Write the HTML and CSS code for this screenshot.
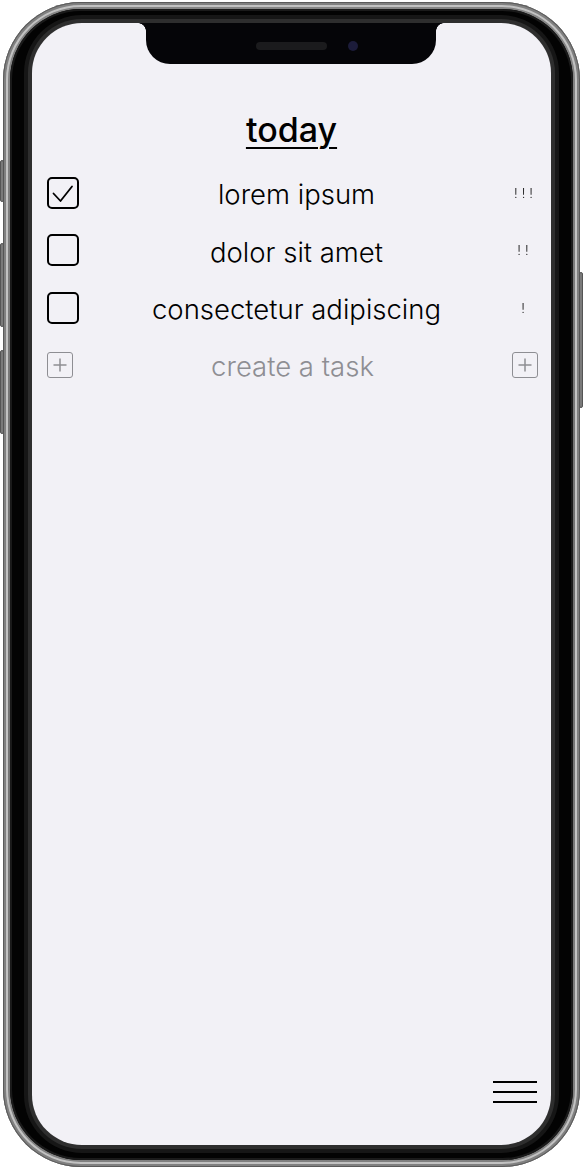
FILE: index.html
```html
<!DOCTYPE html>
<html lang="en">
<head>
<meta charset="utf-8">
<title>today</title>
<link rel="stylesheet" href="styles.css">
</head>
<body>
<div class="phone">
  <span class="btn btn-mute"></span>
  <span class="btn btn-vol-up"></span>
  <span class="btn btn-vol-down"></span>
  <span class="btn btn-power"></span>
  <div class="bezel">
    <div class="screen">
      <div class="notch">
        <span class="speaker"></span>
        <span class="camera"></span>
      </div>
      <h1 class="title">today</h1>
      <ul class="tasks">
        <li class="task">
          <span class="check checked">
            <svg viewBox="0 0 32 32" width="32" height="32"><polyline points="6.5,16.5 13.5,24 25,9.5" fill="none" stroke="#000" stroke-width="1.8" stroke-linecap="round" stroke-linejoin="round"/></svg>
          </span>
          <span class="task-text">lorem ipsum</span>
          <span class="priority">!!!</span>
        </li>
        <li class="task">
          <span class="check"></span>
          <span class="task-text">dolor sit amet</span>
          <span class="priority">!!</span>
        </li>
        <li class="task">
          <span class="check"></span>
          <span class="task-text">consectetur adipiscing</span>
          <span class="priority">!</span>
        </li>
        <li class="task create">
          <span class="plus">
            <svg viewBox="0 0 26 26" width="26" height="26"><path d="M13 6.5v13M6.5 13h13" stroke="#8e8e93" stroke-width="1.5" fill="none"/></svg>
          </span>
          <span class="task-text create-text">create a task</span>
          <span class="plus">
            <svg viewBox="0 0 26 26" width="26" height="26"><path d="M13 6.5v13M6.5 13h13" stroke="#8e8e93" stroke-width="1.5" fill="none"/></svg>
          </span>
        </li>
      </ul>
      <div class="footer">
        <span class="menu"><i></i><i></i><i></i></span>
      </div>
    </div>
  </div>
</div>
</body>
</html>
```
FILE: styles.css
```css
* { box-sizing: border-box; }
html, body { margin: 0; padding: 0; background: #ffffff; }
body { font-family: Inter, "Noto Sans", sans-serif; width: 583px; height: 1169px; overflow: hidden; }

.phone {
  position: relative;
  margin: 2px 0 0 3px;
  width: 577px;
  height: 1165px;
  border-radius: 78px;
  padding: 7px;
  background: linear-gradient(180deg, #858585 0%, #6f6f6f 50%, #808080 100%);
  box-shadow: inset 0 0 0 1px #5a5a5a, inset 0 0 0 3px #808080, inset 0 0 0 5px #c2c2c2;
}

.btn {
  position: absolute;
  width: 4px;
  background: #7a7a7a;
  border: 1px solid #555;
  border-radius: 2px;
}
.btn-mute { left: -3px; top: 158px; height: 42px; }
.btn-vol-up { left: -3px; top: 241px; height: 84px; }
.btn-vol-down { left: -3px; top: 348px; height: 84px; }
.btn-power { right: -3px; top: 270px; height: 136px; }

.bezel {
  height: 100%;
  border-radius: 71px;
  background: #030303;
  padding: 14px 22px 15px 22px;
  box-shadow: inset 0 0 0 2px #1a1a1a;
}

.screen {
  position: relative;
  height: 100%;
  border-radius: 50px;
  background: #f2f1f6;
  display: flex;
  flex-direction: column;
  box-shadow: 0 0 0 4px #2e2e2e, 0 0 0 8px #161616;
}

.notch {
  position: absolute;
  left: 114px;
  top: 0;
  width: 290px;
  height: 41px;
  background: #050508;
  border-radius: 0 0 24px 24px;
}
.notch::before, .notch::after {
  content: "";
  position: absolute;
  top: 0;
  width: 8px;
  height: 8px;
}
.notch::before { left: -8px; background: radial-gradient(circle at 0 100%, transparent 7.5px, #050508 8px); }
.notch::after { right: -8px; background: radial-gradient(circle at 100% 100%, transparent 7.5px, #050508 8px); }
.speaker {
  position: absolute;
  left: 110px;
  top: 19px;
  width: 71px;
  height: 8px;
  border-radius: 4px;
  background: #1b1b1d;
}
.camera {
  position: absolute;
  left: 202px;
  top: 18px;
  width: 10px;
  height: 10px;
  border-radius: 50%;
  background: #1c1c3a;
}

.title {
  margin: 87px 0 0;
  text-align: center;
  font-size: 34px;
  line-height: 40px;
  font-weight: 500;
  color: #000;
  text-decoration: underline;
  text-decoration-thickness: 2px;
  text-underline-offset: 5px;
}

.tasks {
  list-style: none;
  margin: 14px 0 0;
  padding: 0;
}

.task {
  display: grid;
  grid-template-columns: 32px 1fr 24px;
  align-items: center;
  height: 57.5px;
  padding: 0 13px 0 15px;
}

.check {
  width: 32px;
  height: 32px;
  border: 2px solid #000;
  border-radius: 5px;
  position: relative;
}
.check svg { position: absolute; left: -2px; top: -2px; }

.task-text {
  text-align: center;
  font-size: 27.5px;
  line-height: 34px;
  padding-top: 3px;
  font-weight: 300;
  color: #000;
  white-space: nowrap;
}

.priority {
  text-align: center;
  font-size: 13px;
  font-weight: 300;
  letter-spacing: 4px;
  margin-right: 2px;
  color: #111;
  will-change: transform;
}

.create {
  grid-template-columns: 26px 1fr 26px;
  padding: 0 13px 0 15px;
}
.create-text { color: #8e8e93; margin-top: -2px; }
.plus {
  width: 26px;
  height: 26px;
  border: 1.5px solid #8e8e93;
  border-radius: 3px;
  position: relative;
}
.plus svg { position: absolute; left: -1.5px; top: -1.5px; }

.footer {
  margin-top: auto;
  display: flex;
  justify-content: flex-end;
  padding: 0 14px 42px 0;
}
.menu {
  display: flex;
  flex-direction: column;
  gap: 8px;
  width: 44px;
}
.menu i {
  display: block;
  height: 2px;
  background: #000;
}
```
